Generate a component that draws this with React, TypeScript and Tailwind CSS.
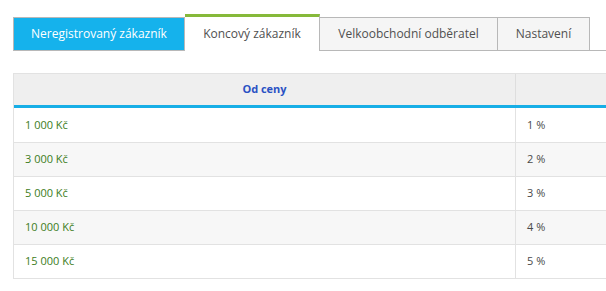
const TABS = [
  { id: "guest", label: "Neregistrovaný zákazník" },
  { id: "retail", label: "Koncový zákazník" },
  { id: "wholesale", label: "Velkoobchodní odběratel" },
  { id: "settings", label: "Nastavení" },
];

const ROWS = [
  { from: "1 000 Kč", discount: "1 %" },
  { from: "3 000 Kč", discount: "2 %" },
  { from: "5 000 Kč", discount: "3 %" },
  { from: "10 000 Kč", discount: "4 %" },
  { from: "15 000 Kč", discount: "5 %" },
];

export default function App() {
  return (
    <div className="min-h-[291px] w-[606px] overflow-hidden bg-white pl-[13px] pt-[14px] font-['Open_Sans',sans-serif]">
      <ul className="flex w-[620px] items-end border-b border-[#b8b8b8] text-[12px]">
        <li className="-mb-px flex h-[34px] w-[172px] items-center justify-center border border-[#b8b8b8] bg-[#15b2ec] text-white">
          {TABS[0].label}
        </li>
        <li className="-mb-px flex h-[37px] w-[135px] items-center justify-center border-t-[3px] border-r border-t-[#86b93a] border-r-[#b8b8b8] bg-white pb-px text-[#505050]">
          {TABS[1].label}
        </li>
        <li className="-mb-px flex h-[34px] w-[178px] items-center justify-center border-y border-r border-[#b8b8b8] bg-[#f5f5f5] text-[#505050]">
          {TABS[2].label}
        </li>
        <li className="-mb-px flex h-[34px] w-[92px] items-center justify-center border-y border-r border-[#b8b8b8] bg-[#f5f5f5] text-[#505050]">
          {TABS[3].label}
        </li>
      </ul>

      <div className="mt-[22px] w-[640px] border-x border-b border-[#e2e2e2]">
        <div className="flex h-[35px] border-t border-[#e2e2e2] bg-[#efefef] border-b-[3px] border-b-[#17aee6]">
          <div className="flex w-[502px] items-center justify-center border-r border-[#dedede] text-[11px] font-bold text-[#2a52c4]">
            Od ceny
          </div>
          <div className="flex-1" />
        </div>
        {ROWS.map((row, i) => (
          <div
            key={row.from}
            className={`flex h-[34px] text-[11px] ${i > 0 ? "border-t border-[#e2e2e2]" : ""} ${i % 2 === 1 ? "bg-[#f7f7f7]" : "bg-white"}`}
          >
            <div className="flex w-[502px] items-center border-r border-[#e2e2e2] pl-[11px] text-[#3c7d22]">{row.from}</div>
            <div className="flex flex-1 items-center pl-[11px] text-[#4a4a4a]">{row.discount}</div>
          </div>
        ))}
      </div>
    </div>
  );
}
